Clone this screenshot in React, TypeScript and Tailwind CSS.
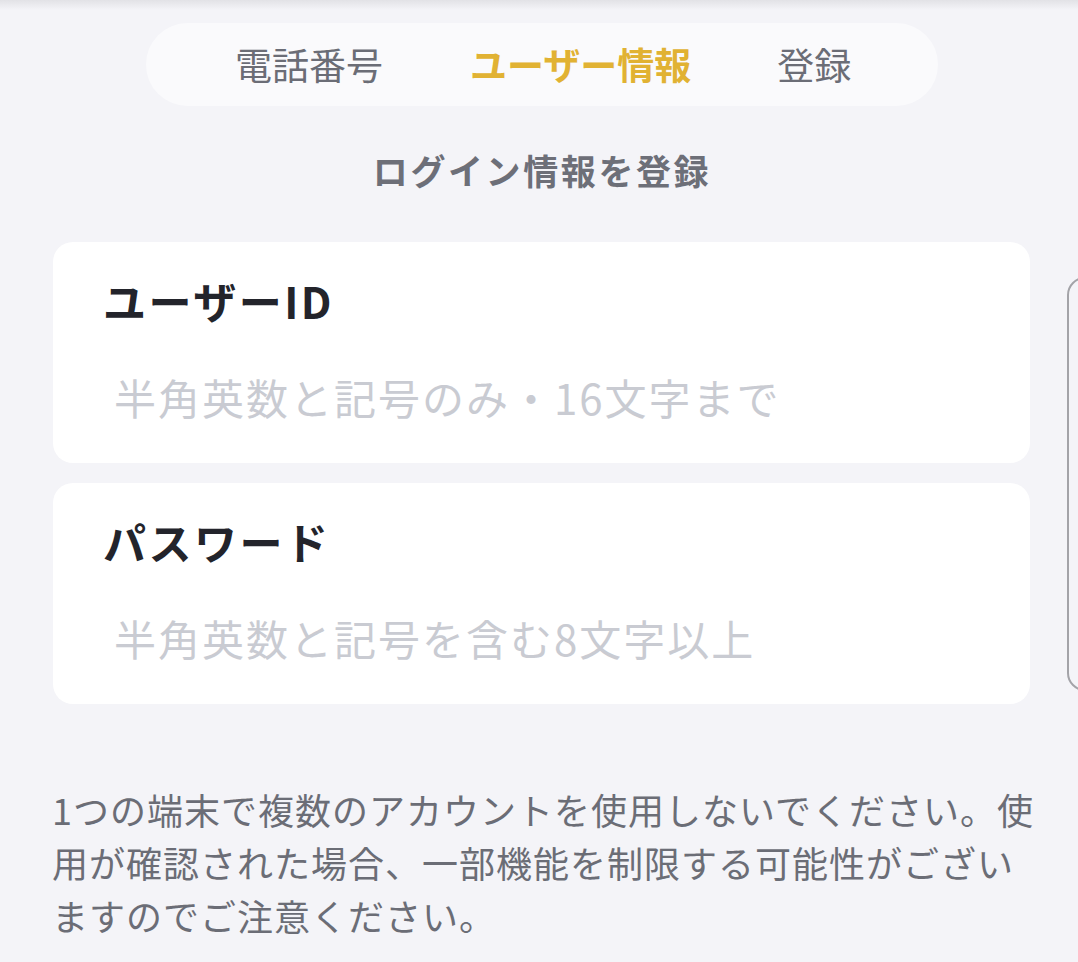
import React from "react";

const font = { fontFamily: '"Noto Sans CJK JP", "Noto Sans", sans-serif' };

function Field({ label, placeholder }: { label: string; placeholder: string }) {
  return (
    <div className="bg-white rounded-[20px] h-[221px] pl-[50px] pr-6 pt-[30px]">
      <div className="text-[43px] font-bold tracking-[2.5px] text-[#23242b] leading-[56px]">{label}</div>
      <div className="mt-[41px] pl-[11px] text-[42px] tracking-[2px] text-[#c9cbd2] leading-[56px]">{placeholder}</div>
    </div>
  );
}

export default function App() {
  return (
    <div style={font} className="relative w-[1078px] h-[962px] bg-[#f4f4f8] overflow-hidden">
      <div className="absolute top-0 left-0 right-0 h-[10px] bg-gradient-to-b from-[#e2e2e6] to-[#f4f4f8]" />
      <div className="flex pt-[23px] pl-[146px]">
        <div className="w-[792px] h-[83px] rounded-full bg-[#fafafc] flex items-center pl-[89px] text-[37px] leading-none">
          <span className="text-[#6b6d76]">電話番号</span>
          <span className="ml-[87px] font-bold text-[#e1b233]">ユーザー情報</span>
          <span className="ml-[86px] text-[#6b6d76]">登録</span>
        </div>
      </div>
      <div className="mt-[42px] pl-[6px] text-center text-[35px] font-bold tracking-[2.6px] text-[#6d6f78] leading-[44px]">ログイン情報を登録</div>
      <div className="mt-[50px] ml-[53px] w-[977px] flex flex-col gap-[20px]">
        <Field label="ユーザーID" placeholder="半角英数と記号のみ・16文字まで" />
        <Field label="パスワード" placeholder="半角英数と記号を含む8文字以上" />
      </div>
      <div className="mt-[79px] pl-[52px] pr-[40px] text-[36px] tracking-[1px] leading-[53px] text-[#6b6d76]">
        1つの端末で複数のアカウントを使用しないでください。使用が確認された場合、一部機能を制限する可能性がございますのでご注意ください。
      </div>
      <div className="absolute left-[1067px] top-[277px] w-[40px] h-[414px] rounded-[18px] border-2 border-[#a3a3a8] bg-[#f4f4f8]" />
    </div>
  );
}
